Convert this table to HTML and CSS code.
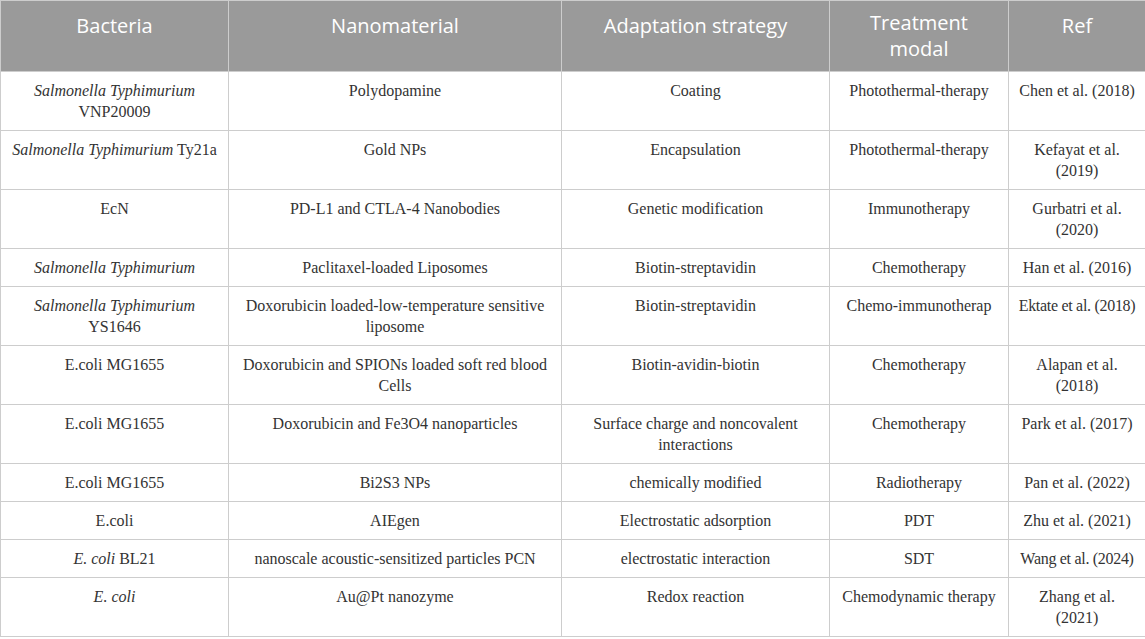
FILE: index.html
```html
<!DOCTYPE html>
<html lang="en">
<head>
<meta charset="utf-8">
<title>Bacteria nanomaterial table</title>
<link rel="stylesheet" href="styles.css">
</head>
<body>
<table class="data">
  <colgroup>
    <col class="c1"><col class="c2"><col class="c3"><col class="c4"><col class="c5">
  </colgroup>
  <thead>
    <tr>
      <th class="one">Bacteria</th>
      <th class="one">Nanomaterial</th>
      <th class="one">Adaptation strategy</th>
      <th>Treatment<br>modal</th>
      <th class="one">Ref</th>
    </tr>
  </thead>
  <tbody>
    <tr>
      <td><i>Salmonella Typhimurium</i><br>VNP20009</td>
      <td>Polydopamine</td>
      <td>Coating</td>
      <td>Photothermal-therapy</td>
      <td>Chen et al. (2018)</td>
    </tr>
    <tr>
      <td><i>Salmonella Typhimurium</i> Ty21a</td>
      <td>Gold NPs</td>
      <td>Encapsulation</td>
      <td>Photothermal-therapy</td>
      <td>Kefayat et al.<br>(2019)</td>
    </tr>
    <tr>
      <td>EcN</td>
      <td>PD-L1 and CTLA-4 Nanobodies</td>
      <td>Genetic modification</td>
      <td>Immunotherapy</td>
      <td>Gurbatri et al.<br>(2020)</td>
    </tr>
    <tr>
      <td><i>Salmonella Typhimurium</i></td>
      <td>Paclitaxel-loaded Liposomes</td>
      <td>Biotin-streptavidin</td>
      <td>Chemotherapy</td>
      <td>Han et al. (2016)</td>
    </tr>
    <tr>
      <td><i>Salmonella Typhimurium</i><br>YS1646</td>
      <td>Doxorubicin loaded-low-temperature sensitive<br>liposome</td>
      <td>Biotin-streptavidin</td>
      <td>Chemo-immunotherap</td>
      <td class="tight">Ektate et al. (2018)</td>
    </tr>
    <tr>
      <td>E.coli MG1655</td>
      <td>Doxorubicin and SPIONs loaded soft red blood<br>Cells</td>
      <td>Biotin-avidin-biotin</td>
      <td>Chemotherapy</td>
      <td>Alapan et al.<br>(2018)</td>
    </tr>
    <tr>
      <td>E.coli MG1655</td>
      <td>Doxorubicin and Fe3O4 nanoparticles</td>
      <td>Surface charge and noncovalent<br>interactions</td>
      <td>Chemotherapy</td>
      <td>Park et al. (2017)</td>
    </tr>
    <tr>
      <td>E.coli MG1655</td>
      <td>Bi2S3 NPs</td>
      <td>chemically modified</td>
      <td>Radiotherapy</td>
      <td>Pan et al. (2022)</td>
    </tr>
    <tr>
      <td>E.coli</td>
      <td>AIEgen</td>
      <td>Electrostatic adsorption</td>
      <td>PDT</td>
      <td>Zhu et al. (2021)</td>
    </tr>
    <tr>
      <td><i>E. coli</i> BL21</td>
      <td>nanoscale acoustic-sensitized particles PCN</td>
      <td>electrostatic interaction</td>
      <td>SDT</td>
      <td class="tight">Wang et al. (2024)</td>
    </tr>
    <tr>
      <td><i>E. coli</i></td>
      <td>Au@Pt nanozyme</td>
      <td>Redox reaction</td>
      <td>Chemodynamic therapy</td>
      <td>Zhang et al.<br>(2021)</td>
    </tr>
  </tbody>
</table>
</body>
</html>
```

FILE: styles.css
```css
html, body {
  margin: 0;
  padding: 0;
  background: #ffffff;
}

.data {
  width: 1145px;
  border-collapse: collapse;
  table-layout: fixed;
  border: 1px solid #cdcdcd;
}

.c1 { width: 228px; }
.c2 { width: 333px; }
.c3 { width: 268px; }
.c4 { width: 179px; }
.c5 { width: 137px; }

.data th {
  background: #9a9a9a;
  color: #ffffff;
  font-family: "Open Sans", "Liberation Sans", sans-serif;
  font-weight: 400;
  font-size: 20px;
  line-height: 26px;
  padding: 9px 4px 9px;
  vertical-align: top;
  text-align: center;
  border: 1px solid #cdcdcd;
}

.data th.one {
  padding-top: 12px;
}

.data td {
  font-family: "Liberation Serif", "Times New Roman", serif;
  font-size: 16px;
  line-height: 21px;
  color: #333333;
  padding: 8px 4px;
  vertical-align: top;
  text-align: center;
  white-space: nowrap;
  border: 1px solid #cdcdcd;
}

.data td.tight {
  letter-spacing: -0.3px;
}
```
